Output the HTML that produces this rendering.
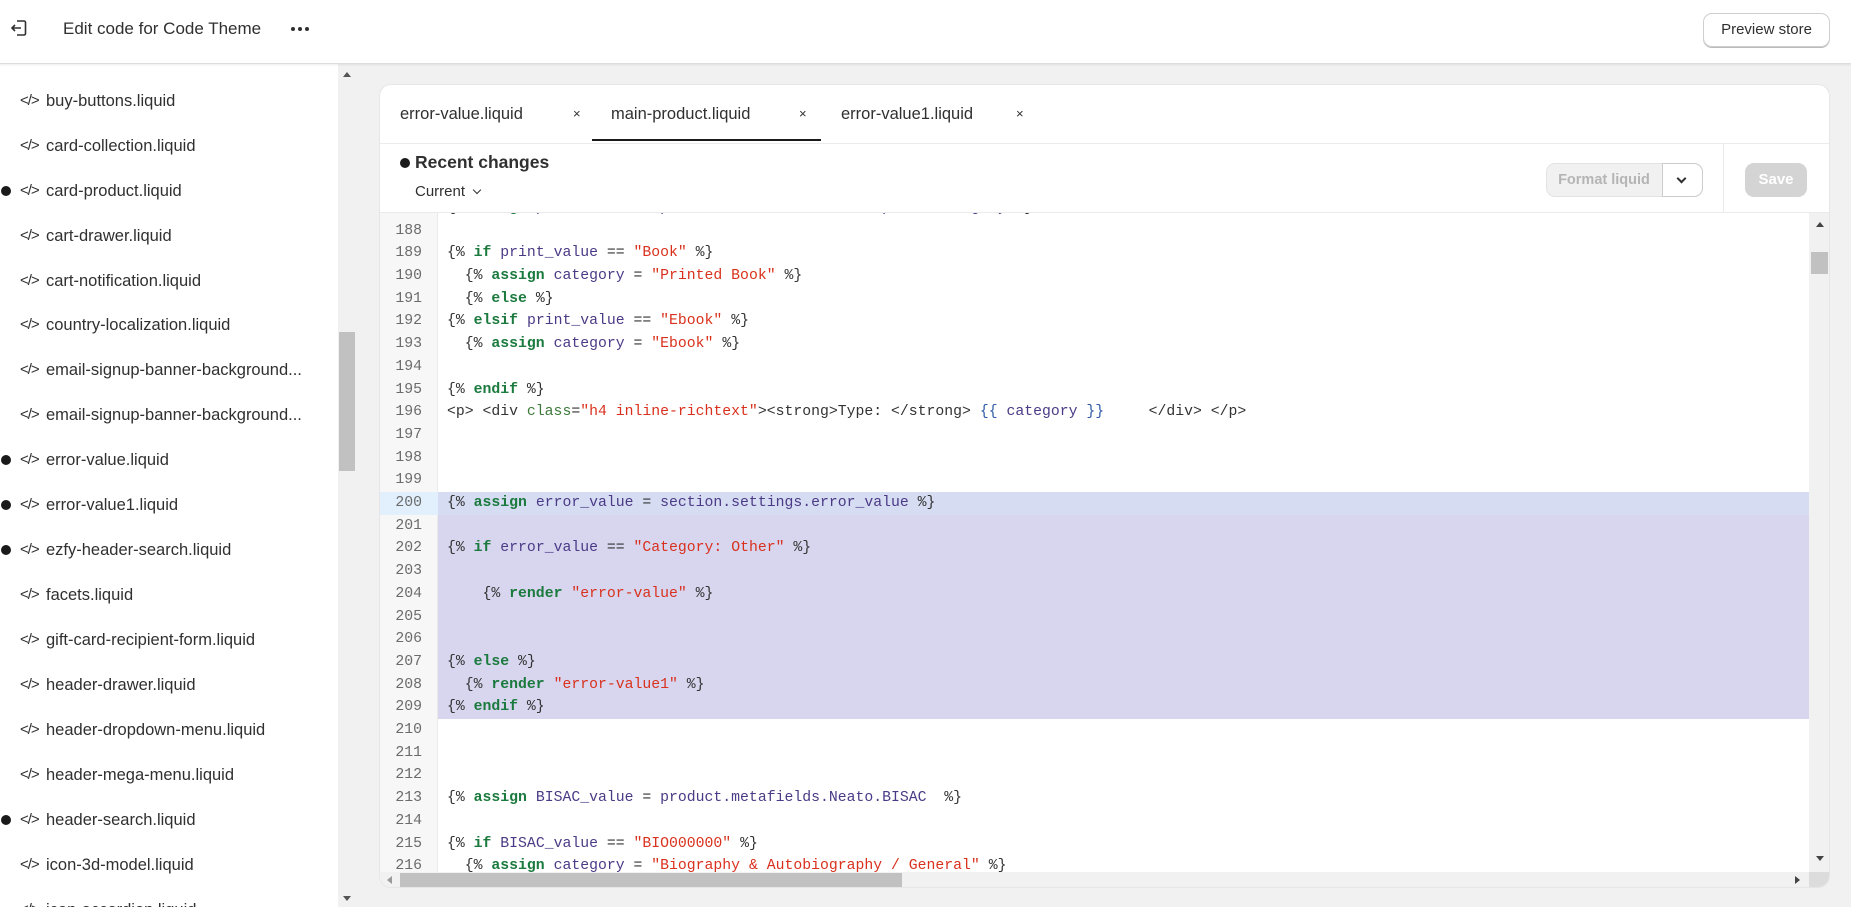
<!DOCTYPE html>
<html><head><meta charset="utf-8"><style>
*{box-sizing:border-box;margin:0;padding:0}
body{width:1851px;height:907px;overflow:hidden;background:#f1f1f1;font-family:"Liberation Sans",sans-serif;color:#303030;position:relative}
.top{position:absolute;left:0;top:0;width:1851px;height:64px;background:#fff;border-bottom:1px solid #ddd;box-shadow:0 1px 2px rgba(0,0,0,.08);z-index:5}
.side{position:absolute;left:0;top:64px;width:338px;height:843px;background:#fff;overflow:hidden}
.it{position:absolute;left:0;height:30px;font-size:16.5px;line-height:30px;white-space:nowrap;color:#303030}
.it .ic{position:absolute;left:20px;top:0;font-size:15px;letter-spacing:-1px}
.it .tx{position:absolute;left:46px}
.it .dot{position:absolute;left:1px;top:10px;width:10px;height:10px;border-radius:50%;background:#1a1a1a}
.sbar{position:absolute;left:338px;top:64px;width:18px;height:843px;background:#f1f1f1}
.card{position:absolute;left:379px;top:84px;width:1451px;height:804px;background:#fff;border-radius:12px;overflow:hidden;border:1px solid #e6e6e6}
.tab{position:absolute;top:0;height:58px;line-height:58px;font-size:16.5px;color:#303030}
.x{position:absolute;top:0;line-height:58px;font-size:13px;color:#303030}
.code{position:absolute;left:0;top:128px;width:1451px;height:659px;overflow:hidden}
.gut{position:absolute;left:0;top:0;width:58px;height:100%;background:#f7f7f7;border-right:1px solid #ebebeb}
.ln{position:absolute;left:0;width:1429px;height:22.7px;font-family:"Liberation Mono",monospace;font-size:14.8px;line-height:22.7px;white-space:pre}
.ln .n{position:absolute;left:0;width:42px;text-align:right;color:#6b6b6b}
.ln .c{position:absolute;left:67px;color:#333}
.k{color:#1b7a3e;font-weight:bold}.v{color:#4b3a86}.s{color:#d9311d}.b{color:#2f5aa8}.a{color:#3d7a3a}
.ed{position:absolute;top:27px;width:4px;height:4px;border-radius:50%;background:#303030}
</style></head><body>
<div class="top">
  <svg style="position:absolute;left:9px;top:18px" width="20" height="20" viewBox="0 0 20 20" fill="none" stroke="#303030" stroke-width="1.6"><path d="M8 3h7a1.5 1.5 0 0 1 1.5 1.5v11A1.5 1.5 0 0 1 15 17H8"/><path d="M12 10H3M6 7l-3 3 3 3"/></svg>
  <div style="position:absolute;left:63px;top:19px;font-size:17px">Edit code for Code Theme</div>
  <div class="ed" style="left:291px"></div><div class="ed" style="left:298px"></div><div class="ed" style="left:305px"></div>
  <div style="position:absolute;left:1703px;top:13px;width:127px;height:34px;border:1px solid #cfcfcf;border-radius:9px;box-shadow:0 1px 0 #bbb;font-size:15px;line-height:32px;text-align:center;color:#303030">Preview store</div>
</div>
<div class="side">
  <div class="it" style="top:-27px"><span class="ic">&lt;/&gt;</span><span class="tx">blog-post-card.liquid</span></div>
  <div class="it" style="top:22px"><span class="ic">&lt;/&gt;</span><span class="tx">buy-buttons.liquid</span></div>
  <div class="it" style="top:67px"><span class="ic">&lt;/&gt;</span><span class="tx">card-collection.liquid</span></div>
  <div class="it" style="top:112px"><span class="dot"></span><span class="ic">&lt;/&gt;</span><span class="tx">card-product.liquid</span></div>
  <div class="it" style="top:157px"><span class="ic">&lt;/&gt;</span><span class="tx">cart-drawer.liquid</span></div>
  <div class="it" style="top:202px"><span class="ic">&lt;/&gt;</span><span class="tx">cart-notification.liquid</span></div>
  <div class="it" style="top:246px"><span class="ic">&lt;/&gt;</span><span class="tx">country-localization.liquid</span></div>
  <div class="it" style="top:291px"><span class="ic">&lt;/&gt;</span><span class="tx">email-signup-banner-background...</span></div>
  <div class="it" style="top:336px"><span class="ic">&lt;/&gt;</span><span class="tx">email-signup-banner-background...</span></div>
  <div class="it" style="top:381px"><span class="dot"></span><span class="ic">&lt;/&gt;</span><span class="tx">error-value.liquid</span></div>
  <div class="it" style="top:426px"><span class="dot"></span><span class="ic">&lt;/&gt;</span><span class="tx">error-value1.liquid</span></div>
  <div class="it" style="top:471px"><span class="dot"></span><span class="ic">&lt;/&gt;</span><span class="tx">ezfy-header-search.liquid</span></div>
  <div class="it" style="top:516px"><span class="ic">&lt;/&gt;</span><span class="tx">facets.liquid</span></div>
  <div class="it" style="top:561px"><span class="ic">&lt;/&gt;</span><span class="tx">gift-card-recipient-form.liquid</span></div>
  <div class="it" style="top:606px"><span class="ic">&lt;/&gt;</span><span class="tx">header-drawer.liquid</span></div>
  <div class="it" style="top:651px"><span class="ic">&lt;/&gt;</span><span class="tx">header-dropdown-menu.liquid</span></div>
  <div class="it" style="top:696px"><span class="ic">&lt;/&gt;</span><span class="tx">header-mega-menu.liquid</span></div>
  <div class="it" style="top:741px"><span class="dot"></span><span class="ic">&lt;/&gt;</span><span class="tx">header-search.liquid</span></div>
  <div class="it" style="top:786px"><span class="ic">&lt;/&gt;</span><span class="tx">icon-3d-model.liquid</span></div>
  <div class="it" style="top:831px"><span class="ic">&lt;/&gt;</span><span class="tx">icon-accordion.liquid</span></div>
</div>
<div class="sbar">
  <div style="position:absolute;left:5px;top:8px;width:0;height:0;border-left:4px solid transparent;border-right:4px solid transparent;border-bottom:5px solid #555"></div>
  <div style="position:absolute;left:1px;top:268px;width:16px;height:139px;background:#c1c1c1"></div>
  <div style="position:absolute;left:5px;top:832px;width:0;height:0;border-left:4px solid transparent;border-right:4px solid transparent;border-top:5px solid #555"></div>
</div>
<div class="card">
  <div style="position:absolute;left:0;top:58px;width:100%;height:1px;background:#ebebeb"></div>
  <div class="tab" style="left:20px">error-value.liquid</div><div class="x" style="left:193px">×</div>
  <div class="tab" style="left:231px">main-product.liquid</div><div class="x" style="left:419px">×</div>
  <div style="position:absolute;left:212px;top:54px;width:229px;height:2px;background:#1a1a1a"></div>
  <div class="tab" style="left:461px">error-value1.liquid</div><div class="x" style="left:636px">×</div>
  <div style="position:absolute;left:20px;top:73px;width:10px;height:10px;border-radius:50%;background:#1a1a1a"></div>
  <div style="position:absolute;left:35px;top:67px;font-size:17.5px;font-weight:bold;color:#303030">Recent changes</div>
  <div style="position:absolute;left:35px;top:98px;font-size:15px">Current <span style="display:inline-block;margin-left:5px;width:6px;height:6px;border-right:1.5px solid #303030;border-bottom:1.5px solid #303030;transform:rotate(45deg);position:relative;top:-3px"></span></div>
  <div style="position:absolute;left:1166px;top:78px;width:157px;height:34px;border-radius:9px;background:#f1f1f1;border:1px solid #e3e3e3"></div>
  <div style="position:absolute;left:1166px;top:78px;width:116px;height:34px;line-height:34px;text-align:center;font-size:14.5px;color:#b5b5b5;font-weight:bold">Format liquid</div>
  <div style="position:absolute;left:1282px;top:78px;width:41px;height:34px;background:#fff;border:1px solid #ccc;border-radius:0 9px 9px 0"><span style="position:absolute;left:15px;top:11px;width:7px;height:7px;border-right:2px solid #303030;border-bottom:2px solid #303030;transform:rotate(45deg)"></span></div>
  <div style="position:absolute;left:1343px;top:58px;width:1px;height:70px;background:#ebebeb"></div>
  <div style="position:absolute;left:1365px;top:78px;width:62px;height:34px;border-radius:9px;background:#d4d4d4;color:#fff;font-weight:bold;font-size:15px;line-height:34px;text-align:center">Save</div>
  <div style="position:absolute;left:0;top:127px;width:100%;height:1px;background:#ebebeb"></div>
  <div class="code">
    <div class="gut"></div>
    <div style="position:absolute;left:58px;top:279px;width:1371px;height:22.7px;background:#d6dcf2"></div>
    <div style="position:absolute;left:0;top:279px;width:58px;height:22.7px;background:#e2effc"></div>
    <div style="position:absolute;left:58px;top:301.7px;width:1371px;height:204.3px;background:#d8d5ef"></div>
    <div id="lines"></div>
    <div style="position:absolute;left:1429px;top:0;width:22px;height:659px;background:#f1f1f1">
      <div style="position:absolute;left:7px;top:9px;border-left:4px solid transparent;border-right:4px solid transparent;border-bottom:5px solid #444"></div>
      <div style="position:absolute;left:2px;top:39px;width:17px;height:22px;background:#c1c1c1"></div>
      <div style="position:absolute;left:7px;top:643px;border-left:4px solid transparent;border-right:4px solid transparent;border-top:5px solid #444"></div>
    </div>
    <div style="position:absolute;left:0;top:659px;width:1429px;height:17px;background:#f1f1f1"></div>
  </div>
  <div style="position:absolute;left:0;top:787px;width:1429px;height:17px;background:#f1f1f1">
    <div style="position:absolute;left:7px;top:4px;border-top:4px solid transparent;border-bottom:4px solid transparent;border-right:5px solid #999"></div>
    <div style="position:absolute;left:20px;top:1px;width:502px;height:15px;background:#c1c1c1"></div>
    <div style="position:absolute;left:1415px;top:4px;border-top:4px solid transparent;border-bottom:4px solid transparent;border-left:5px solid #444"></div>
  </div>
  <div style="position:absolute;left:1429px;top:787px;width:22px;height:17px;background:#dcdcdc"></div>
</div>
<script>
var L=[
[187,'{% <span class="k">assign</span> <span class="v">print_value</span> = <span class="v">product.metafields.Neato.print_category</span> %}'],
[188,''],
[189,'{% <span class="k">if</span> <span class="v">print_value</span> == <span class="s">"Book"</span> %}'],
[190,'  {% <span class="k">assign</span> <span class="v">category</span> = <span class="s">"Printed Book"</span> %}'],
[191,'  {% <span class="k">else</span> %}'],
[192,'{% <span class="k">elsif</span> <span class="v">print_value</span> == <span class="s">"Ebook"</span> %}'],
[193,'  {% <span class="k">assign</span> <span class="v">category</span> = <span class="s">"Ebook"</span> %}'],
[194,''],
[195,'{% <span class="k">endif</span> %}'],
[196,'&lt;p&gt; &lt;div <span class="a">class</span>=<span class="s">"h4 inline-richtext"</span>&gt;&lt;strong&gt;Type: &lt;/strong&gt; <span class="b">{{</span> <span class="v">category</span> <span class="b">}}</span>     &lt;/div&gt; &lt;/p&gt;'],
[197,''],[198,''],[199,''],
[200,'{% <span class="k">assign</span> <span class="v">error_value</span> = <span class="v">section.settings.error_value</span> %}'],
[201,''],
[202,'{% <span class="k">if</span> <span class="v">error_value</span> == <span class="s">"Category: Other"</span> %}'],
[203,''],
[204,'    {% <span class="k">render</span> <span class="s">"error-value"</span> %}'],
[205,''],[206,''],
[207,'{% <span class="k">else</span> %}'],
[208,'  {% <span class="k">render</span> <span class="s">"error-value1"</span> %}'],
[209,'{% <span class="k">endif</span> %}'],
[210,''],[211,''],[212,''],
[213,'{% <span class="k">assign</span> <span class="v">BISAC_value</span> = <span class="v">product.metafields.Neato.BISAC</span>  %}'],
[214,''],
[215,'{% <span class="k">if</span> <span class="v">BISAC_value</span> == <span class="s">"BIO000000"</span> %}'],
[216,'  {% <span class="k">assign</span> <span class="v">category</span> = <span class="s">"Biography &amp; Autobiography / General"</span> %}']
];
var h='';
L.forEach(function(r){var t=6.6+(r[0]-188)*22.7;h+='<div class="ln" style="top:'+t+'px">'+(r[0]>187?'<span class="n">'+r[0]+'</span>':'')+'<span class="c">'+r[1]+'</span></div>';});
document.getElementById('lines').innerHTML=h;
</script>
</body></html>
